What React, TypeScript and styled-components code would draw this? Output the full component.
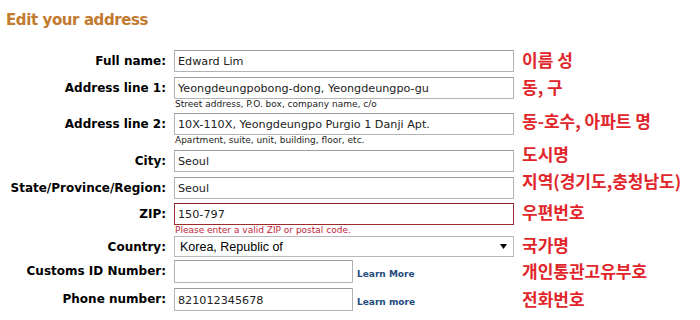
import styled, { createGlobalStyle } from 'styled-components';

const GlobalStyle = createGlobalStyle`
  body {
    margin: 0;
    background: #ffffff;
    font-family: 'DejaVu Sans', Verdana, sans-serif;
  }
`;

const Page = styled.div`
  padding: 10px 6px 0 6px;
`;

const Heading = styled.h1`
  margin: 0 0 20px 0;
  font-size: 15px;
  letter-spacing: -0.4px;
  font-weight: bold;
  color: #c27a2e;
  line-height: 20px;
`;

const Form = styled.div`
  display: flex;
  flex-direction: column;
`;

interface IRow {
  space: number;
}

const Row = styled.div<IRow>`
  display: grid;
  grid-template-columns: 160px 340px 1fr;
  column-gap: 8px;
  align-items: start;
  padding-bottom: ${(props) => props.space}px;
`;

const Label = styled.label`
  font-size: 12px;
  font-weight: bold;
  color: #000;
  text-align: right;
  line-height: 22px;
  white-space: nowrap;
`;

const Field = styled.div`
  display: flex;
  flex-direction: column;
`;

const Inline = styled.div`
  display: flex;
  align-items: center;
  gap: 4px;
`;

interface IInput {
  error?: boolean;
  short?: boolean;
}

const Input = styled.input<IInput>`
  box-sizing: border-box;
  width: ${(props) => (props.short ? '179px' : '340px')};
  height: ${(props) => (props.short ? '23px' : '22px')};
  margin: 0;
  padding: 1px 3px 0;
  border: 1px solid ${(props) => (props.error ? '#9c2b2b' : '#b3b3b3')};
  border-top-color: ${(props) => (props.error ? '#8a1f1f' : '#9c9c9c')};
  font-family: 'DejaVu Sans', Tahoma, sans-serif;
  font-size: 11.2px;
  color: #222;
  background: #fff;
  outline: none;
`;

const Select = styled.div`
  box-sizing: border-box;
  width: 340px;
  height: 21px;
  display: flex;
  align-items: center;
  justify-content: space-between;
  padding: 0 6px 0 5px;
  border: 1px solid #b8b8b8;
  font-family: 'Liberation Sans', Arial, sans-serif;
  font-size: 12.5px;
  color: #000;
`;

const Arrow = styled.svg`
  width: 7px;
  height: 5px;
`;

interface IHint {
  error?: boolean;
}

const Hint = styled.span<IHint>`
  font-size: 9px;
  line-height: 10px;
  padding-left: 1px;
  color: ${(props) => (props.error ? '#c0253a' : '#222')};
  white-space: nowrap;
`;

const LearnMore = styled.a`
  font-size: 9px;
  font-weight: bold;
  color: #234a7c;
  text-decoration: none;
  padding-top: 4px;
`;

interface INote {
  shift?: number;
}

const Note = styled.span<INote>`
  font-family: 'Noto Sans CJK KR', sans-serif;
  font-size: 17px;
  font-weight: bold;
  color: #e1262b;
  line-height: 20px;
  white-space: nowrap;
  margin-top: ${(props) => props.shift ?? 0}px;
`;

const App = () => {
  return (
    <Page>
      <GlobalStyle />
      <Heading>Edit your address</Heading>
      <Form>
        <Row space={5}>
          <Label>Full name:</Label>
          <Field>
            <Input defaultValue="Edward Lim" />
          </Field>
          <Note>이름 성</Note>
        </Row>
        <Row space={4}>
          <Label>Address line 1:</Label>
          <Field>
            <Input defaultValue="Yeongdeungpobong-dong, Yeongdeungpo-gu" />
            <Hint>Street address, P.O. box, company name, c/o</Hint>
          </Field>
          <Note>동, 구</Note>
        </Row>
        <Row space={5}>
          <Label>Address line 2:</Label>
          <Field>
            <Input defaultValue="10X-110X, Yeongdeungpo Purgio 1 Danji Apt." />
            <Hint>Apartment, suite, unit, building, floor, etc.</Hint>
          </Field>
          <Note shift={-2}>동-호수, 아파트 명</Note>
        </Row>
        <Row space={5}>
          <Label>City:</Label>
          <Field>
            <Input defaultValue="Seoul" />
          </Field>
          <Note shift={-6}>도시명</Note>
        </Row>
        <Row space={4}>
          <Label>State/Province/Region:</Label>
          <Field>
            <Input defaultValue="Seoul" />
          </Field>
          <Note shift={-6}>지역(경기도,충청남도)</Note>
        </Row>
        <Row space={1}>
          <Label>ZIP:</Label>
          <Field>
            <Input error defaultValue="150-797" />
            <Hint error>Please enter a valid ZIP or postal code.</Hint>
          </Field>
          <Note shift={-1}>우편번호</Note>
        </Row>
        <Row space={2}>
          <Label>Country:</Label>
          <Field>
            <Select>
              Korea, Republic of
              <Arrow viewBox="0 0 7 5">
                <path d="M0 0 L7 0 L3.5 5 Z" fill="#000" />
              </Arrow>
            </Select>
          </Field>
          <Note shift={-1}>국가명</Note>
        </Row>
        <Row space={5}>
          <Label>Customs ID Number:</Label>
          <Inline>
            <Input short />
            <LearnMore href="#">Learn More</LearnMore>
          </Inline>
          <Note shift={1}>개인통관고유부호</Note>
        </Row>
        <Row space={0}>
          <Label>Phone number:</Label>
          <Inline>
            <Input short defaultValue="821012345678" />
            <LearnMore href="#">Learn more</LearnMore>
          </Inline>
          <Note shift={1}>전화번호</Note>
        </Row>
      </Form>
    </Page>
  );
};

export default App;
